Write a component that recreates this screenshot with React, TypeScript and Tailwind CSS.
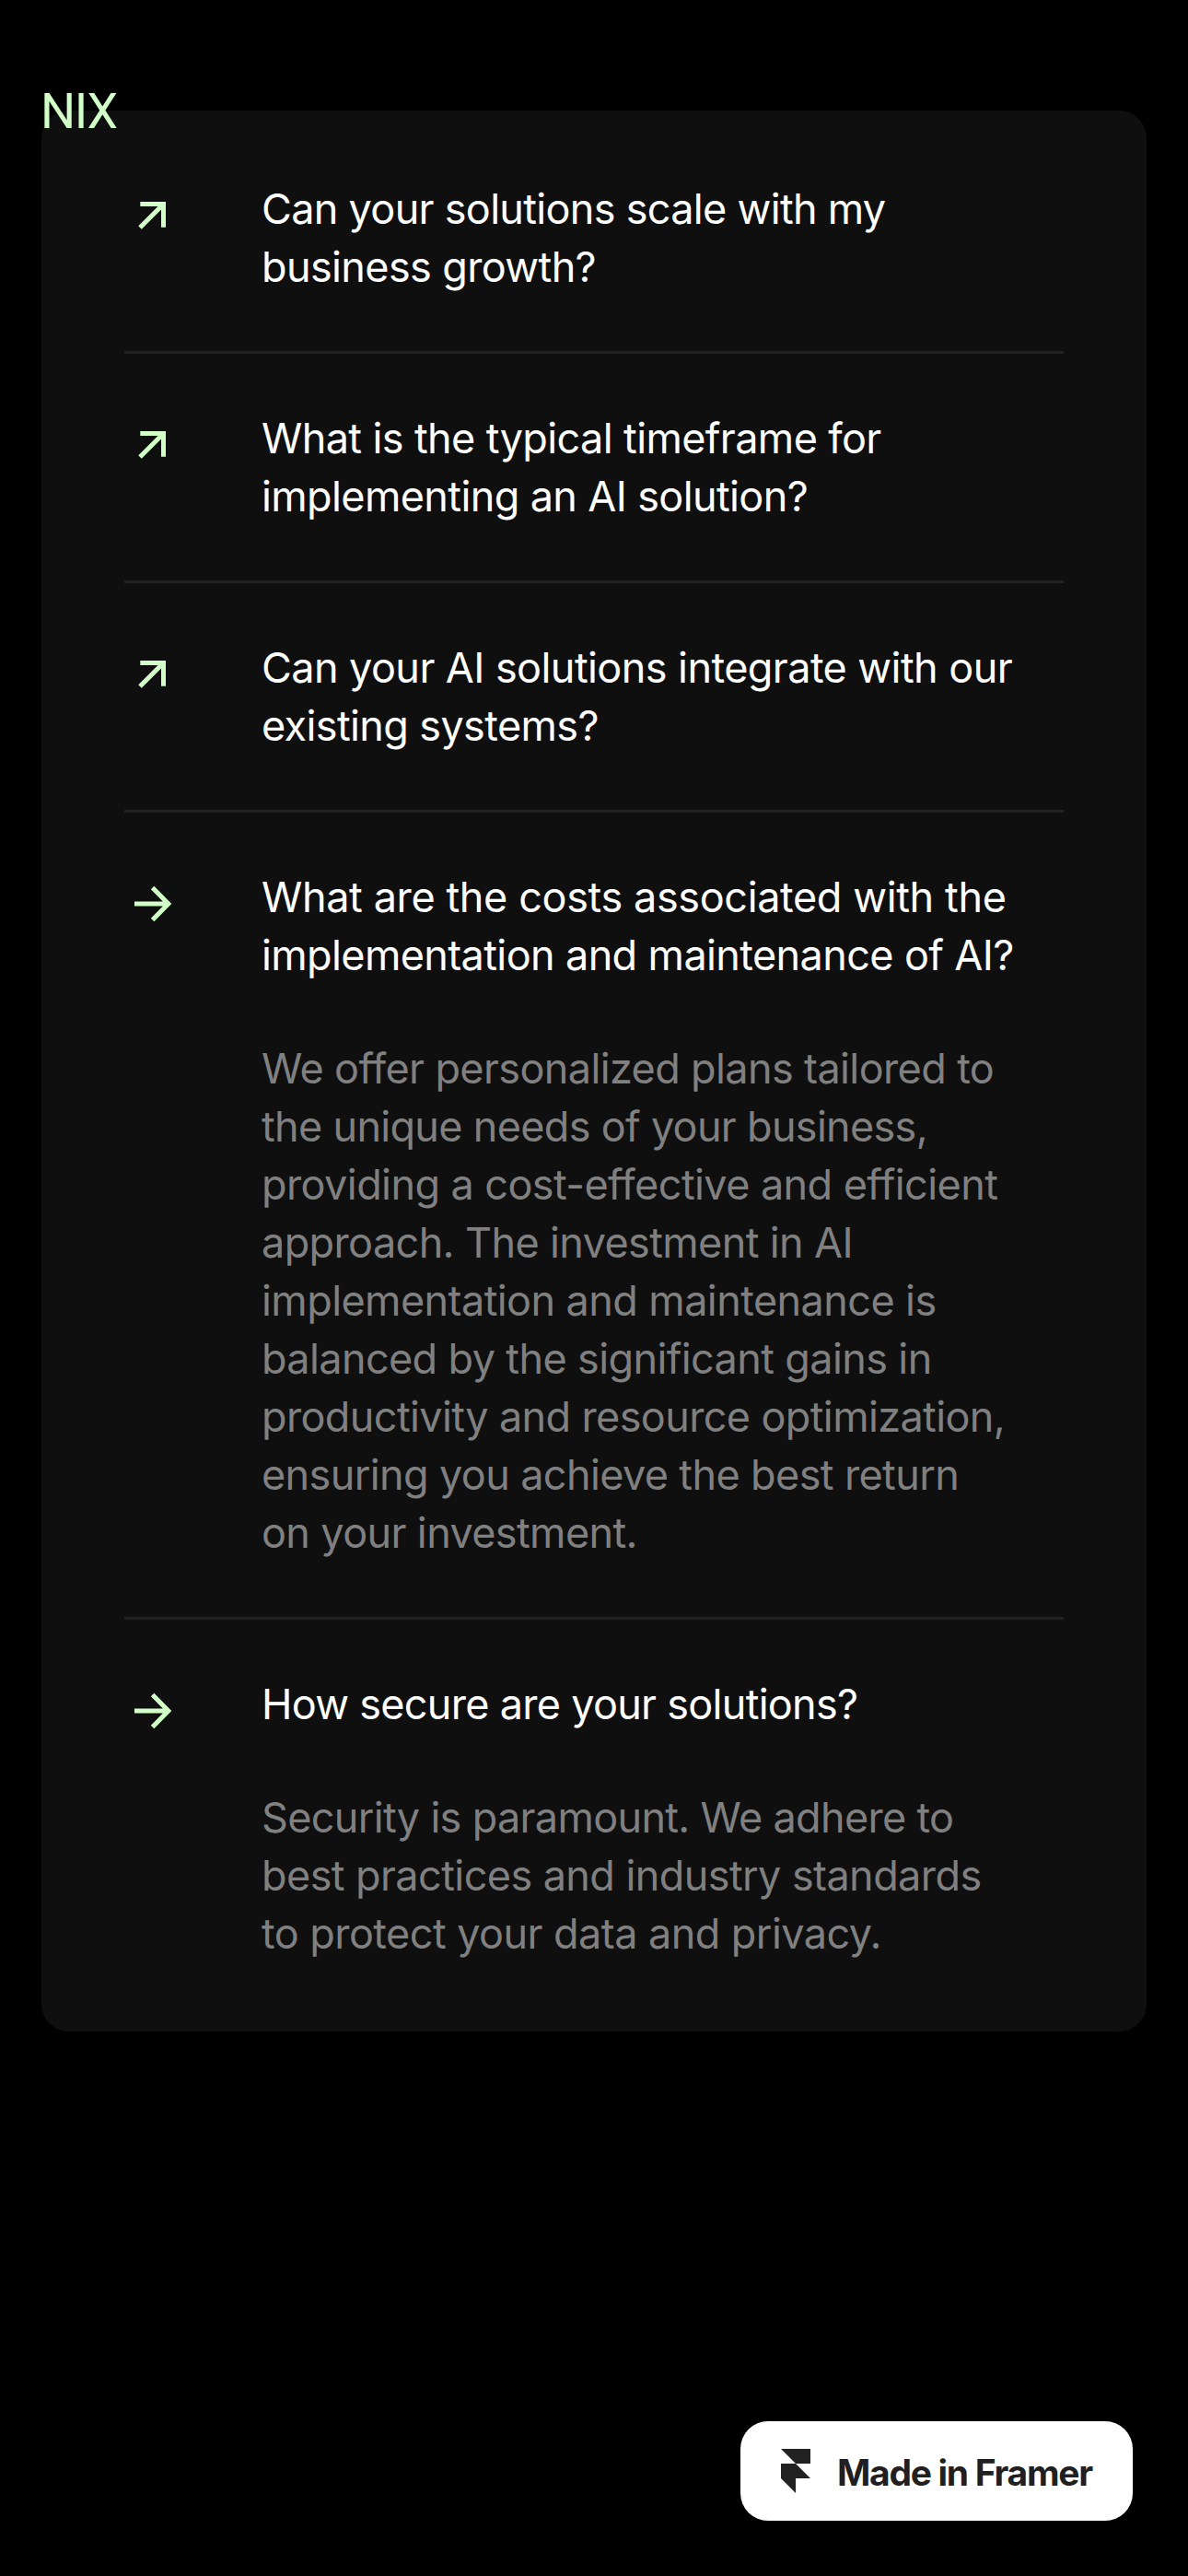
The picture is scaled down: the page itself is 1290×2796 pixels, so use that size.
type Item = { question: string[]; answer?: string[] };

const items: Item[] = [
  { question: ["Can your solutions scale with my", "business growth?"] },
  { question: ["What is the typical timeframe for", "implementing an AI solution?"] },
  { question: ["Can your AI solutions integrate with our", "existing systems?"] },
  {
    question: ["What are the costs associated with the", "implementation and maintenance of AI?"],
    answer: [
      "We offer personalized plans tailored to",
      "the unique needs of your business,",
      "providing a cost-effective and efficient",
      "approach. The investment in AI",
      "implementation and maintenance is",
      "balanced by the significant gains in",
      "productivity and resource optimization,",
      "ensuring you achieve the best return",
      "on your investment.",
    ],
  },
  {
    question: ["How secure are your solutions?"],
    answer: [
      "Security is paramount. We adhere to",
      "best practices and industry standards",
      "to protect your data and privacy.",
    ],
  },
];

// Lines whose letter spacing differs from the default of the list.
const tracking: Record<string, string> = {
  "Can your solutions scale with my": "tracking-[-0.69px]",
  "Can your AI solutions integrate with our": "tracking-[-0.57px]",
  "What are the costs associated with the": "tracking-[-0.38px]",
  "the unique needs of your business,": "tracking-[-0.69px]",
  "providing a cost-effective and efficient": "tracking-[-0.58px]",
  "implementation and maintenance is": "tracking-[-0.58px]",
  "How secure are your solutions?": "tracking-[-0.71px]",
  "Security is paramount. We adhere to": "tracking-[-0.68px]",
  "best practices and industry standards": "tracking-[-0.58px]",
  "to protect your data and privacy.": "tracking-[-0.55px]",
};

function Arrow({ open }: { open: boolean }) {
  return (
    <svg className="mt-[9px] size-[60px] shrink-0" viewBox="0 0 60 60" fill="none" stroke="#d2ffc8" strokeWidth="5">
      {open ? (
        <path d="M11 30h36M30.6 12.6l17.2 17.4L30.6 47.4" />
      ) : (
        <path d="M17.3 17.5h25.2v25.2M42 18L17 43" />
      )}
    </svg>
  );
}

function Lines({ lines }: { lines: string[] }) {
  return (
    <>
      {lines.map((line) => (
        <span key={line} className={`block whitespace-nowrap ${tracking[line] ?? "tracking-[-0.62px]"}`}>
          {line}
        </span>
      ))}
    </>
  );
}

export default function App() {
  return (
    <div className="relative h-[2796px] w-[1290px] overflow-hidden bg-black px-[45px] pt-[120px] font-['Inter',sans-serif]">
      <header className="absolute top-[89px] left-[44px] font-['Roboto',sans-serif] text-[53.5px] leading-[64px] tracking-[-1.3px] text-[#d2ffc8]">
        NIX
      </header>
      <main className="rounded-[30px] bg-[#0f0f0f] px-[90px] py-[15px]">
        {items.map((item, i) => (
          <section
            key={item.question[0]}
            className={
              i < items.length - 1
                ? "flex gap-[89px] border-b-[3px] border-[#222222] py-[60px]"
                : "flex gap-[89px] py-[60px]"
            }
          >
            <Arrow open={!!item.answer} />
            <div className="flex flex-col gap-[60px] text-[45px] leading-[63px]">
              <h2 className="text-white">
                <Lines lines={item.question} />
              </h2>
              {item.answer && (
                <p className="text-[#808080]">
                  <Lines lines={item.answer} />
                </p>
              )}
            </div>
          </section>
        ))}
      </main>
      <a className="absolute right-[60px] bottom-[60px] flex h-[108px] w-[426px] items-center gap-[29px] rounded-[30px] bg-white pl-[44px] text-[#221f20]">
        <svg className="h-[48px] w-[32px]" viewBox="0 0 32 48" fill="#222222">
          <path d="M0 0h32v16H16zM0 16h16l16 16H16v16L0 32z" />
        </svg>
        <span className="mt-[3px] text-[39px] leading-[48px] font-bold tracking-[-1.3px] whitespace-nowrap">
          Made in Framer
        </span>
      </a>
    </div>
  );
}
